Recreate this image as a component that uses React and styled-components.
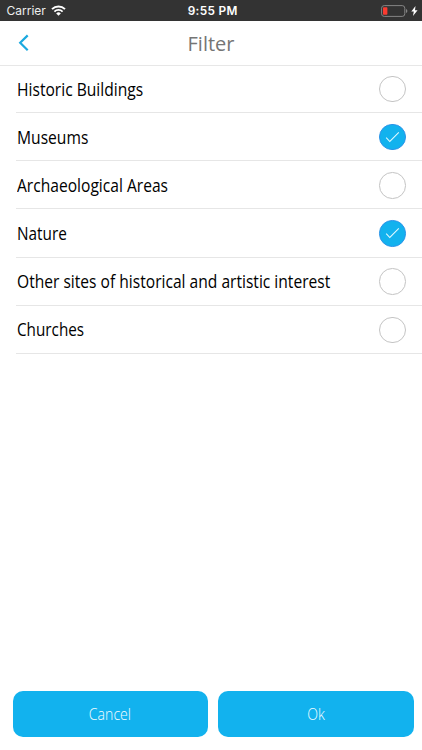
import React, { useState } from 'react';
import styled, { createGlobalStyle } from 'styled-components';

const GlobalStyle = createGlobalStyle`
  * {
    box-sizing: border-box;
  }

  body {
    margin: 0;
    background: #fff;
    font-family: 'Open Sans', 'Noto Sans', sans-serif;
  }
`;

const Screen = styled.div`
  display: flex;
  flex-direction: column;
  height: 100vh;
  min-height: 750px;
  background: #fff;
`;

const StatusBar = styled.div`
  display: grid;
  grid-template-columns: 1fr auto 1fr;
  align-items: center;
  height: 21px;
  padding: 0 4.5px 0 6.5px;
  background: #333;
  color: #fff;
  font-family: Inter, sans-serif;
`;

const Carrier = styled.div`
  display: flex;
  align-items: center;
  gap: 5.5px;
  font-size: 12px;
  color: #eee;
`;

const Time = styled.div`
  padding-left: 1.5px;
  font-size: 11.8px;
  font-weight: 600;
  letter-spacing: 0.35px;
`;

const Power = styled.div`
  display: flex;
  align-items: center;
  justify-content: flex-end;
  gap: 3px;
`;

const Header = styled.header`
  display: grid;
  grid-template-columns: 48px 1fr 48px;
  align-items: center;
  height: 45px;
  border-bottom: 1px solid #e7e7e7;
`;

const BackButton = styled.button`
  display: flex;
  padding: 0 0 0 18px;
  border: 0;
  background: none;
`;

const Title = styled.h1`
  margin: 0;
  text-align: center;
  font-size: 20px;
  font-weight: 400;
  color: #757575;
`;

const List = styled.ul`
  flex: 1;
  margin: 0;
  padding: 0 0 0 16px;
  list-style: none;
`;

const Row = styled.li`
  display: flex;
  align-items: center;
  justify-content: space-between;
  height: 48.2px;
  padding: 1px 16.5px 0 0.6px;
  border-bottom: 1px solid #e6e6e6;
  cursor: pointer;

  &:first-child {
    height: 47px;
    padding-top: 0;
  }
`;

const Label = styled.span`
  margin-top: -1px;
  font-size: 17.5px;
  transform: scaleX(${({ $stretch }) => $stretch});
  transform-origin: left center;
  color: #000;
  white-space: nowrap;
`;

const Check = styled.span`
  display: flex;
  flex-shrink: 0;
  align-items: center;
  justify-content: center;
  width: 26.5px;
  height: 26.5px;
  border: 1px solid ${({ $checked }) => ($checked ? '#2b93e9' : '#c4c4c4')};
  border-radius: 50%;
  background: ${({ $checked }) => ($checked ? '#12b2ee' : '#fff')};
`;

const Footer = styled.footer`
  display: grid;
  grid-template-columns: 1fr 1fr;
  gap: 10px;
  padding: 0 8.5px 13.5px 12.5px;
`;

const Button = styled.button`
  height: 45.5px;
  padding: 0;
  border: 0;
  border-radius: 10px;
  background: #12b2ee;
  color: #f4fdff;
  font-family: inherit;
  font-size: 16px;
  font-weight: 300;
`;

const ButtonText = styled.span`
  display: inline-block;
  transform: scaleX(0.88);
`;

const WifiIcon = () => (
  <svg width="15" height="11" viewBox="0 0 15 11" fill="none" stroke="#fff">
    <path d="M1 4.1a9.4 9.4 0 0 1 13 0" strokeWidth="2" />
    <path d="M3.4 6.6a5.9 5.9 0 0 1 8.2 0" strokeWidth="1.8" />
    <path d="M7.5 10.7 5.2 8.4a3.3 3.3 0 0 1 4.6 0Z" fill="#fff" stroke="none" />
  </svg>
);

const BatteryIcon = () => (
  <svg width="27" height="12" viewBox="0 0 27 12" fill="none">
    <rect x="0.6" y="0.6" width="23.2" height="10.8" rx="2.6" stroke="#858585" />
    <rect x="2" y="2.2" width="4.4" height="7.6" rx="0.8" fill="#fb3b30" />
    <path d="M25 4v4q1.4-.6 1.4-2T25 4Z" fill="#858585" />
  </svg>
);

const BoltIcon = () => (
  <svg width="7" height="10" viewBox="0 0 7 10" fill="#fff">
    <path d="M4.5 0 .3 5.5h2.5L2 10l4.6-5.8H4Z" />
  </svg>
);

const BackIcon = () => (
  <svg width="12" height="18" viewBox="0 0 12 18" fill="none">
    <path d="M9.7 1.4 2.2 8.8l7.5 7.5" stroke="#1ba9df" strokeWidth="2.2" />
  </svg>
);

const CheckIcon = () => (
  <svg width="15" height="12" viewBox="0 0 15 12" fill="none">
    <path d="m1.2 6.6 3.6 3.9 9-9.1" stroke="#dff9ff" strokeWidth="1.1" />
  </svg>
);

const categories = [
  { name: 'Historic Buildings', stretch: 0.892 },
  { name: 'Museums', stretch: 0.893 },
  { name: 'Archaeological Areas', stretch: 0.891 },
  { name: 'Nature', stretch: 0.876 },
  { name: 'Other sites of historical and artistic interest', stretch: 0.891 },
  { name: 'Churches', stretch: 0.872 },
];

const App = () => {
  const [selected, setSelected] = useState(['Museums', 'Nature']);

  const toggle = (name) => {
    setSelected((current) =>
      current.includes(name) ? current.filter((item) => item !== name) : [...current, name]
    );
  };

  return (
    <>
      <GlobalStyle />
      <Screen>
        <StatusBar>
          <Carrier>
            <span>Carrier</span>
            <WifiIcon />
          </Carrier>
          <Time>9:55 PM</Time>
          <Power>
            <BatteryIcon />
            <BoltIcon />
          </Power>
        </StatusBar>

        <Header>
          <BackButton aria-label="Back">
            <BackIcon />
          </BackButton>
          <Title>Filter</Title>
        </Header>

        <List>
          {categories.map(({ name, stretch }) => (
            <Row key={name} onClick={() => toggle(name)}>
              <Label $stretch={stretch}>{name}</Label>
              <Check $checked={selected.includes(name)}>
                {selected.includes(name) && <CheckIcon />}
              </Check>
            </Row>
          ))}
        </List>

        <Footer>
          <Button>
            <ButtonText>Cancel</ButtonText>
          </Button>
          <Button>
            <ButtonText>Ok</ButtonText>
          </Button>
        </Footer>
      </Screen>
    </>
  );
};

export default App;
